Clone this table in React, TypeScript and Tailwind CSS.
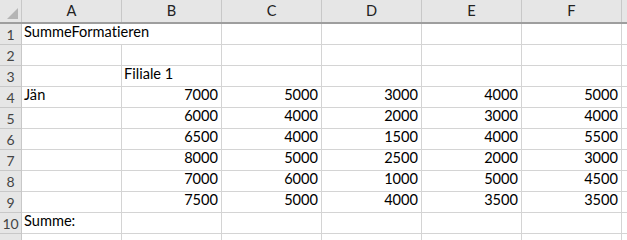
const columns = ['A', 'B', 'C', 'D', 'E', 'F']

type Cell = { text: string; num?: boolean }

const nums = (list: number[]): Cell[] => list.map((n) => ({ text: String(n), num: true }))

const rows: Cell[][] = [
  [{ text: 'SummeFormatieren' }],
  [],
  [{ text: '' }, { text: 'Filiale 1' }],
  [{ text: 'Jän' }, ...nums([7000, 5000, 3000, 4000, 5000])],
  [{ text: '' }, ...nums([6000, 4000, 2000, 3000, 4000])],
  [{ text: '' }, ...nums([6500, 4000, 1500, 4000, 5500])],
  [{ text: '' }, ...nums([8000, 5000, 2500, 2000, 3000])],
  [{ text: '' }, ...nums([7000, 6000, 1000, 5000, 4500])],
  [{ text: '' }, ...nums([7500, 5000, 4000, 3500, 3500])],
  [{ text: 'Summe:' }],
  [],
]

const App = () => {
  return (
    <div
      className="w-[627px] h-[240px] overflow-hidden bg-white text-[14.6px] text-black [font-variant-ligatures:none]"
      style={{ fontFamily: 'Lato, "Liberation Sans", sans-serif' }}
    >
      {/* column header */}
      <div className="flex h-[24px] bg-[#e6e6e6] border-b-2 border-[#9e9e9e]">
        <div className="relative w-[22px] shrink-0 border-r border-[#c8c8c8]">
          <div className="absolute right-[3px] bottom-[3px] w-0 h-0 border-l-[11px] border-l-transparent border-b-[11px] border-b-[#b5b5b5]" />
        </div>
        {columns.map((c) => (
          <div key={c} className="w-[100px] shrink-0 flex items-center justify-center border-r border-[#c8c8c8] text-[#222]">
            {c}
          </div>
        ))}
        <div className="flex-1" />
      </div>

      {rows.map((row, r) => (
        <div key={r} className="flex h-[21px]">
          <div className="w-[22px] shrink-0 flex items-center justify-center bg-[#e6e6e6] border-r border-b border-[#c8c8c8] text-[#444] text-[14px]">
            {r < 10 ? r + 1 : ''}
          </div>
          {columns.map((c, i) => {
            const cell = row[i]
            const overflow = cell && !cell.num && cell.text.length > 10
            return (
              <div
                key={c}
                className={`w-[100px] shrink-0 flex items-end pb-[1px] border-b border-[#d4d4d4] whitespace-nowrap ${overflow ? 'overflow-visible' : 'border-r'} ${cell?.num ? 'justify-end pr-[3px]' : 'pl-[2px]'}`}
              >
                {cell?.text}
              </div>
            )
          })}
          <div className="flex-1 border-b border-[#d4d4d4]" />
        </div>
      ))}
    </div>
  )
}

export default App
